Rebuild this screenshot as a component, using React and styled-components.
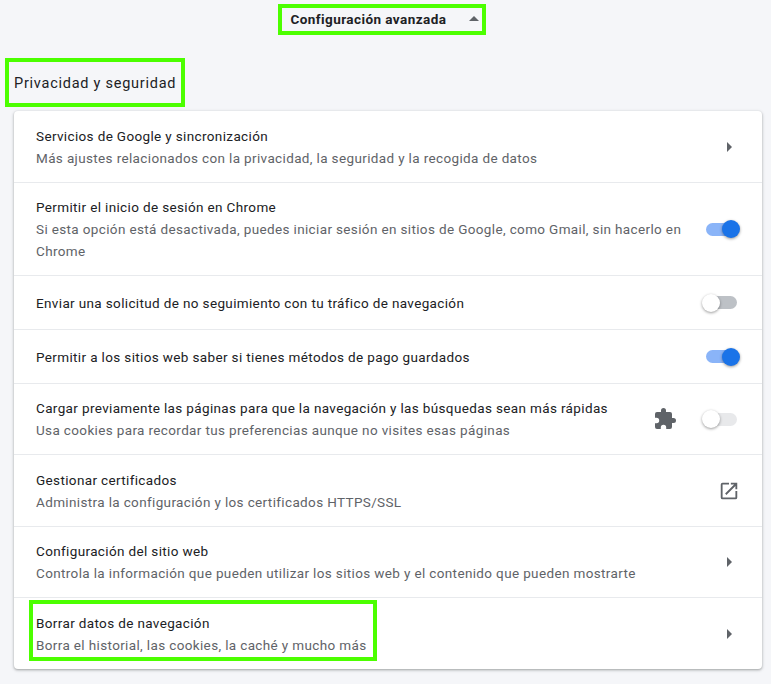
import React from "react";
import styled, { createGlobalStyle } from "styled-components";

const GREEN = "#4cff00";

const GlobalStyle = createGlobalStyle`
  html, body {
    margin: 0;
    background: #f5f6f9;
    font-family: Roboto, "Liberation Sans", sans-serif;
    -webkit-font-smoothing: antialiased;
  }
`;

const Page = styled.div`
  width: 771px;
  height: 684px;
  overflow: hidden;
  box-sizing: border-box;
  padding: 4px 9px 0 5px;
`;

const TopBar = styled.div`
  display: flex;
  justify-content: center;
  padding-right: 4px;
`;

const AdvancedToggle = styled.div`
  box-sizing: border-box;
  width: 208px;
  height: 31px;
  border: 4px solid ${GREEN};
  display: flex;
  align-items: center;
  justify-content: space-between;
  padding: 0 3px 2px 9px;
  font-size: 13.5px;
  font-weight: 700;
  letter-spacing: 0.43px;
  color: #202124;
`;

const CaretUp = styled.span`
  width: 0;
  height: 0;
  border-left: 5px solid transparent;
  border-right: 5px solid transparent;
  border-bottom: 5px solid #5f6368;
`;

const SectionTitle = styled.h2`
  box-sizing: border-box;
  width: 180px;
  height: 49px;
  margin: 23px 0 4px;
  border: 4px solid ${GREEN};
  display: flex;
  align-items: center;
  padding: 2px 0 0 5px;
  font-size: 14.5px;
  font-weight: 400;
  letter-spacing: 0.75px;
  color: #202124;
  white-space: nowrap;
`;

const Card = styled.div`
  margin-left: 9px;
  background: #fff;
  border-radius: 4px;
  box-shadow: 0 1px 2px rgba(60, 64, 67, 0.3), 0 1px 3px 1px rgba(60, 64, 67, 0.15);
`;

const Row = styled.div`
  box-sizing: border-box;
  height: ${(p) => p.$height}px;
  display: flex;
  align-items: center;
  padding: 0 22px;
  & + & {
    border-top: 1px solid #e8eaed;
  }
`;

const RowText = styled.div`
  flex: 1;
  min-width: 0;
  position: relative;
  padding-top: ${(p) => (p.$low ? "2px" : "0")};
  ${(p) =>
    p.$highlight &&
    `
    &::after {
      content: "";
      position: absolute;
      left: -7px;
      top: -11px;
      width: 348px;
      height: 61px;
      box-sizing: border-box;
      border: 4px solid ${GREEN};
    }
  `}
`;

const Title = styled.div`
  font-size: 13.5px;
  line-height: 20px;
  letter-spacing: 0.36px;
  color: #202124;
`;

const Subtitle = styled.div`
  font-size: 13.5px;
  line-height: 22px;
  letter-spacing: 0.36px;
  color: #5f6368;
  margin-top: 1px;
`;

const Trailing = styled.div`
  display: flex;
  align-items: center;
  justify-content: flex-end;
  flex: none;
  width: 36px;
  margin-left: 22px;
`;

const CaretRight = styled.span`
  width: 0;
  height: 0;
  border-top: 5px solid transparent;
  border-bottom: 5px solid transparent;
  border-left: 5px solid #5f6368;
  margin-right: 8px;
`;

const SwitchRoot = styled.div`
  position: relative;
  flex: none;
  width: 31px;
  height: 13px;
  margin-right: 3px;
  border-radius: 7px;
  background: ${(p) => (p.$on ? "#8ab4f8" : p.$disabled ? "#e8e9eb" : "#bdc1c6")};
`;

const SwitchKnob = styled.div`
  position: absolute;
  top: -2.5px;
  width: 18px;
  height: 18px;
  border-radius: 50%;
  left: ${(p) => (p.$on ? "16px" : "-4px")};
  background: ${(p) => (p.$on ? "#1a73e8" : "#fff")};
  box-shadow: 0 1px 3px rgba(0, 0, 0, 0.4);
`;

const ExtensionIcon = styled.svg`
  flex: none;
  width: 24px;
  height: 24px;
  fill: #5f6368;
  margin-right: 5px;
`;

const OpenIcon = styled.svg`
  flex: none;
  width: 22px;
  height: 22px;
  fill: #5f6368;
`;

const Toggle = ({ on, disabled }) => (
  <SwitchRoot $on={on} $disabled={disabled}>
    <SwitchKnob $on={on} />
  </SwitchRoot>
);

const rows = [
  {
    height: 71,
    low: true,
    title: "Servicios de Google y sincronización",
    sub: "Más ajustes relacionados con la privacidad, la seguridad y la recogida de datos",
    end: "caret",
  },
  {
    height: 93,
    title: "Permitir el inicio de sesión en Chrome",
    sub: "Si esta opción está desactivada, puedes iniciar sesión en sitios de Google, como Gmail, sin hacerlo en Chrome",
    end: "on",
  },
  {
    height: 54,
    title: "Enviar una solicitud de no seguimiento con tu tráfico de navegación",
    end: "off",
  },
  {
    height: 54,
    title: "Permitir a los sitios web saber si tienes métodos de pago guardados",
    end: "on",
  },
  {
    height: 71,
    title: "Cargar previamente las páginas para que la navegación y las búsquedas sean más rápidas",
    sub: "Usa cookies para recordar tus preferencias aunque no visites esas páginas",
    end: "extension",
  },
  {
    height: 72,
    low: true,
    title: "Gestionar certificados",
    sub: "Administra la configuración y los certificados HTTPS/SSL",
    end: "open",
  },
  {
    height: 71,
    title: "Configuración del sitio web",
    sub: "Controla la información que pueden utilizar los sitios web y el contenido que pueden mostrarte",
    end: "caret",
  },
  {
    height: 72,
    low: true,
    title: "Borrar datos de navegación",
    sub: "Borra el historial, las cookies, la caché y mucho más",
    end: "caret",
    highlight: true,
  },
];

const renderEnd = (end) => {
  if (end === "caret") return <CaretRight />;
  if (end === "on") return <Toggle on />;
  if (end === "off") return <Toggle />;
  if (end === "open")
    return (
      <OpenIcon viewBox="0 0 24 24">
        <path d="M19 19H5V5h7V3H5a2 2 0 0 0-2 2v14a2 2 0 0 0 2 2h14a2 2 0 0 0 2-2v-7h-2v7zM14 3v2h3.59l-9.83 9.83 1.41 1.41L19 6.41V10h2V3h-7z" />
      </OpenIcon>
    );
  return <Toggle disabled />;
};

export default function App() {
  return (
    <Page>
      <GlobalStyle />
      <TopBar>
        <AdvancedToggle>
          Configuración avanzada
          <CaretUp />
        </AdvancedToggle>
      </TopBar>
      <SectionTitle>Privacidad y seguridad</SectionTitle>
      <Card>
        {rows.map((row) => (
          <Row key={row.title} $height={row.height}>
            <RowText $highlight={row.highlight} $low={row.low}>
              <Title>{row.title}</Title>
              {row.sub && <Subtitle>{row.sub}</Subtitle>}
            </RowText>
            {row.end === "extension" && (
              <ExtensionIcon viewBox="0 0 24 24">
                <path d="M20.5 11H19V7a2 2 0 0 0-2-2h-4V3.5a2.5 2.5 0 0 0-5 0V5H4a2 2 0 0 0-2 2v3.8h1.5a2.7 2.7 0 0 1 0 5.4H2V20a2 2 0 0 0 2 2h3.8v-1.5a2.7 2.7 0 0 1 5.4 0V22H17a2 2 0 0 0 2-2v-4h1.5a2.5 2.5 0 0 0 0-5z" />
              </ExtensionIcon>
            )}
            <Trailing>{renderEnd(row.end)}</Trailing>
          </Row>
        ))}
      </Card>
    </Page>
  );
}
